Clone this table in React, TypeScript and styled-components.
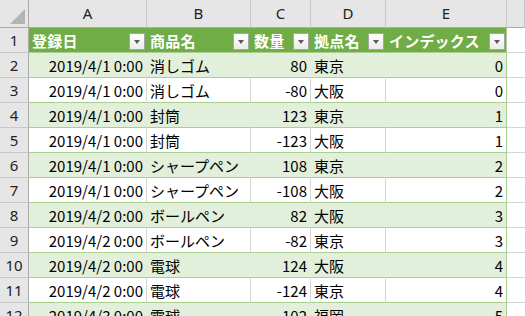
import React from "react";
import styled, { createGlobalStyle } from "styled-components";

const Global = createGlobalStyle`
  html, body { margin: 0; padding: 0; background: #fff; overflow: hidden; }
  body { font-family: "Noto Sans CJK JP", "Noto Sans", sans-serif; }
`;

const COLS = "29px 118px 104px 60px 75px 121px 1fr";

const Sheet = styled.div`
  width: 525px;
  height: 316px;
  overflow: hidden;
  font-size: 15px;
  color: #000;
`;

const Row = styled.div<{ $h: number }>`
  display: grid;
  grid-template-columns: ${COLS};
  height: ${(p) => p.$h}px;
`;

const Corner = styled.div`
  position: relative;
  background: #e6e6e6;
  border-right: 1px solid #ababab;
  border-bottom: 1px solid #ababab;
`;

const CornerTri = styled.div`
  position: absolute;
  right: 3px;
  bottom: 3px;
  width: 0;
  height: 0;
  border-left: 15px solid transparent;
  border-bottom: 15px solid #b4b4b4;
`;

const ColHead = styled.div<{ $last?: boolean }>`
  display: flex;
  align-items: center;
  justify-content: center;
  background: #e6e6e6;
  color: #222;
  border-right: 1px solid #c8c8c8;
  border-bottom: 1px solid #ababab;
  font-family: "Noto Sans", "Noto Sans CJK JP", sans-serif;
  font-size: 15px;
  line-height: 1;
`;

const RowHead = styled.div`
  display: flex;
  align-items: center;
  justify-content: center;
  background: #e6e6e6;
  color: #222;
  border-right: 1px solid #ababab;
  border-bottom: 1px solid #c8c8c8;
  font-family: "Noto Sans", "Noto Sans CJK JP", sans-serif;
  font-size: 15px;
  line-height: 1;
`;

type Kind = "band" | "plain";

const HeadCell = styled.div<{ $edge?: boolean }>`
  display: flex;
  align-items: center;
  background: #70ad47;
  color: #fff;
  font-weight: 700;
  padding-left: 3px;
  border-right: 1px solid ${(p) => (p.$edge ? "#a9d08e" : "#70ad47")};
  border-bottom: 1px solid #a9d08e;
  white-space: nowrap;
  overflow: hidden;
  line-height: 1;
`;

const HeadLabel = styled.span`
  flex: 1;
  letter-spacing: 0.2px;
`;

const FilterBtn = styled.div`
  align-self: flex-end;
  margin: 0 1px 2px 0;
  width: 16px;
  height: 17px;
  box-sizing: border-box;
  border: 1px solid #a6a6a6;
  background: linear-gradient(#ffffff, #ebebeb);
  display: flex;
  align-items: center;
  justify-content: center;
  flex: none;
`;

const Arrow = styled.div`
  width: 0;
  height: 0;
  border-left: 3.5px solid transparent;
  border-right: 3.5px solid transparent;
  border-top: 4px solid #595959;
  margin-top: 1px;
`;

const Cell = styled.div<{ $kind: Kind; $right?: boolean; $edge?: boolean }>`
  display: flex;
  align-items: center;
  justify-content: ${(p) => (p.$right ? "flex-end" : "flex-start")};
  padding: ${(p) => (p.$right ? "0 3px 0 0" : "0 0 0 3px")};
  background: ${(p) => (p.$kind === "band" ? "#e2efda" : "#ffffff")};
  border-right: 1px solid
    ${(p) => (p.$edge ? "#a9d08e" : p.$kind === "band" ? "#e2efda" : "#d4d4d4")};
  border-bottom: 1px solid #a9d08e;
  white-space: nowrap;
  overflow: hidden;
  line-height: 1;
`;

const Empty = styled.div<{ $top?: boolean }>`
  background: #fff;
  border-bottom: 1px solid #d4d4d4;
`;

const headers = ["登録日", "商品名", "数量", "拠点名", "インデックス"];

const data: [string, string, number, string, number][] = [
  ["2019/4/1 0:00", "消しゴム", 80, "東京", 0],
  ["2019/4/1 0:00", "消しゴム", -80, "大阪", 0],
  ["2019/4/1 0:00", "封筒", 123, "東京", 1],
  ["2019/4/1 0:00", "封筒", -123, "大阪", 1],
  ["2019/4/1 0:00", "シャープペン", 108, "東京", 2],
  ["2019/4/1 0:00", "シャープペン", -108, "大阪", 2],
  ["2019/4/2 0:00", "ボールペン", 82, "大阪", 3],
  ["2019/4/2 0:00", "ボールペン", -82, "東京", 3],
  ["2019/4/2 0:00", "電球", 124, "大阪", 4],
  ["2019/4/2 0:00", "電球", -124, "東京", 4],
  ["2019/4/3 0:00", "電球", 102, "福岡", 5],
];

export default function App() {
  return (
    <>
      <Global />
      <Sheet>
        <Row $h={28}>
          <Corner>
            <CornerTri />
          </Corner>
          {["A", "B", "C", "D", "E", ""].map((c) => (
            <ColHead key={c || "F"}>{c}</ColHead>
          ))}
        </Row>
        <Row $h={25}>
          <RowHead>1</RowHead>
          {headers.map((h, i) => (
            <HeadCell key={h} $edge={i === 4}>
              <HeadLabel>{h}</HeadLabel>
              <FilterBtn>
                <Arrow />
              </FilterBtn>
            </HeadCell>
          ))}
          <Empty />
        </Row>
        {data.map((r, i) => {
          const kind: Kind = i % 2 === 0 ? "band" : "plain";
          return (
            <Row $h={25} key={i}>
              <RowHead>{i + 2}</RowHead>
              <Cell $kind={kind} $right>{r[0]}</Cell>
              <Cell $kind={kind}>{r[1]}</Cell>
              <Cell $kind={kind} $right>{r[2]}</Cell>
              <Cell $kind={kind}>{r[3]}</Cell>
              <Cell $kind={kind} $right $edge>{r[4]}</Cell>
              <Empty />
            </Row>
          );
        })}
      </Sheet>
    </>
  );
}
